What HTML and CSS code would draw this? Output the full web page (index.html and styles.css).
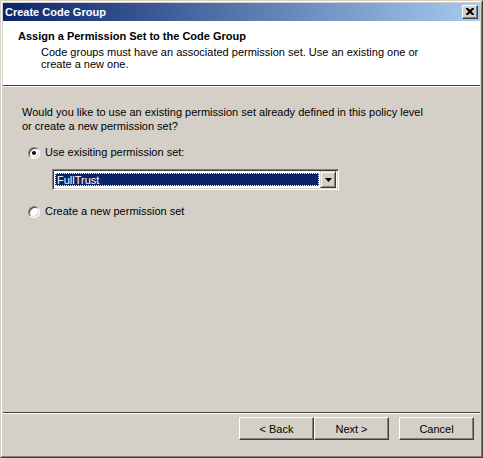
FILE: index.html
```html
<!DOCTYPE html>
<html>
<head>
<meta charset="utf-8">
<link rel="stylesheet" href="styles.css">
</head>
<body>
<div class="window">
  <div class="inner">
    <div class="titlebar">
      <span class="title">Create Code Group</span>
      <span class="close"><svg width="8" height="7" viewBox="0 0 8 7"><path d="M0 0h2l2 2 2-2h2v1l-2.5 2.5L8 6v1H6L4 5 2 7H0V6l2.5-2.5L0 1z" fill="#000"/></svg></span>
    </div>
    <div class="header">
      <div class="h-title">Assign a Permission Set to the Code Group</div>
      <div class="h-desc">Code groups must have an associated permission set. Use an existing one or<br>create a new one.</div>
    </div>
    <div class="sep"></div>
    <div class="main">
      <div class="question">Would you like to use an existing permission set already defined in this policy level<br>or create a new permission set?</div>
      <div class="radio-row first">
        <span class="radio checked"><span class="dot"></span></span>
        <span class="label">Use exisiting permission set:</span>
      </div>
      <div class="combo">
        <div class="combo-field"><span class="combo-sel">FullTrust</span></div>
        <div class="combo-btn"><svg width="7" height="4" viewBox="0 0 7 4"><path d="M0 0h7L3.5 4z" fill="#000"/></svg></div>
      </div>
      <div class="radio-row second">
        <span class="radio"></span>
        <span class="label">Create a new permission set</span>
      </div>
    </div>
    <div class="sep"></div>
    <div class="footer">
      <button class="btn">&lt; Back</button>
      <button class="btn">Next &gt;</button>
      <button class="btn cancel">Cancel</button>
    </div>
  </div>
</div>
</body>
</html>
```

FILE: styles.css
```css
html, body {
  margin: 0;
  padding: 0;
  background: #D4D0C8;
}
body {
  font-family: "Liberation Sans", Arial, sans-serif;
  font-size: 11px;
  color: #000;
}
.window {
  width: 483px;
  height: 458px;
  box-sizing: border-box;
  border: 1px solid;
  border-color: #D4D0C8 #404040 #404040 #D4D0C8;
  background: #D4D0C8;
}
.inner {
  height: 100%;
  box-sizing: border-box;
  border: 1px solid;
  border-color: #FFFFFF #808080 #808080 #FFFFFF;
  padding: 1px;
  display: flex;
  flex-direction: column;
}
.titlebar {
  height: 18px;
  flex: none;
  background: linear-gradient(to right, #0A246A, #A6CAF0);
  display: flex;
  align-items: center;
  justify-content: space-between;
  padding: 0 2px 0 2px;
}
.title {
  color: #fff;
  font-weight: bold;
  font-size: 11px;
  line-height: 13px;
  margin-left: 0;
}
.close {
  width: 16px;
  height: 14px;
  box-sizing: border-box;
  background: #D4D0C8;
  border: 1px solid;
  border-color: #fff #404040 #404040 #fff;
  box-shadow: inset -1px -1px 0 #808080;
  display: flex;
  align-items: center;
  justify-content: center;
  padding: 0 1px 1px 0;
}
.close svg { display: block; }
.header {
  height: 64px;
  flex: none;
  box-sizing: border-box;
  background: #fff;
  padding: 9px 0 0 15px;
}
.h-title {
  font-weight: bold;
  line-height: 13px;
}
.h-desc {
  margin: 3px 0 0 23px;
  line-height: 12px;
}
.sep {
  height: 0;
  flex: none;
  border-top: 1px solid #404040;
  border-bottom: 1px solid #fff;
}
.main {
  flex: 1;
  padding: 18px 0 0 19px;
  display: flex;
  flex-direction: column;
  align-items: flex-start;
}
.question {
  line-height: 14px;
}
.radio-row {
  display: flex;
  align-items: center;
  height: 13px;
  margin-left: 6px;
}
.radio-row.first { margin-top: 13px; }
.radio-row.second { margin-top: 15px; }
.radio {
  width: 12px;
  height: 12px;
  box-sizing: border-box;
  border-radius: 50%;
  background: #fff;
  border: 1px solid;
  border-color: #808080 #fff #fff #808080;
  box-shadow: inset 1px 1px 0 #404040, inset -1px -1px 0 #D4D0C8;
  display: flex;
  align-items: center;
  justify-content: center;
}
.dot {
  width: 4px;
  height: 4px;
  border-radius: 50%;
  background: #000;
}
.label {
  margin-left: 5px;
  line-height: 13px;
}
.combo {
  margin: 10px 0 0 30px;
  width: 287px;
  height: 21px;
  box-sizing: border-box;
  border: 1px solid;
  border-color: #808080 #fff #fff #808080;
  box-shadow: inset 1px 1px 0 #404040, inset -1px -1px 0 #D4D0C8;
  background: #fff;
  padding: 2px;
  display: flex;
}
.combo-field {
  flex: 1;
  padding: 1px 1px 1px 0;
  display: flex;
}
.combo-sel {
  flex: 1;
  background: #0A246A;
  color: #fff;
  outline: 1px dotted #fff;
  outline-offset: -1px;
  line-height: 15px;
  padding-left: 2px;
}
.combo-btn {
  width: 16px;
  height: 17px;
  margin-top: -1px;
  box-sizing: border-box;
  background: #D4D0C8;
  border: 1px solid;
  border-color: #D4D0C8 #404040 #404040 #D4D0C8;
  box-shadow: inset 1px 1px 0 #fff, inset -1px -1px 0 #808080;
  display: flex;
  align-items: center;
  justify-content: center;
}
.combo-btn svg { display: block; }
.footer {
  flex: none;
  height: 41px;
  box-sizing: border-box;
  padding: 3px 6px 0 0;
  display: flex;
  justify-content: flex-end;
  align-items: flex-start;
}
.btn {
  width: 75px;
  height: 23px;
  margin: 0;
  padding: 0;
  box-sizing: border-box;
  font-family: "Liberation Sans", Arial, sans-serif;
  font-size: 11px;
  color: #000;
  background: #D4D0C8;
  border: 1px solid;
  border-color: #fff #404040 #404040 #fff;
  box-shadow: inset -1px -1px 0 #808080;
}
.btn.cancel {
  margin-left: 10px;
}
```
